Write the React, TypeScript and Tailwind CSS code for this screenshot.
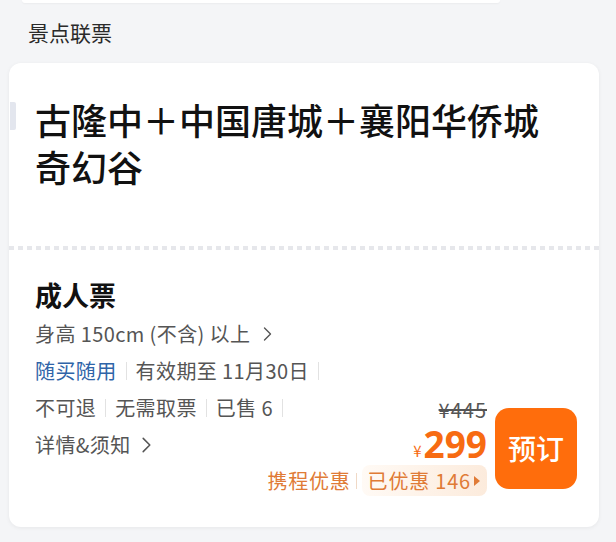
import React from "react";

const Sep = () => (
  <span className="inline-block w-px h-[18px] bg-[#e2e2e2] mx-[9px] align-[-3px]" />
);

const Chevron = ({ className }: { className?: string }) => (
  <svg viewBox="0 0 10 16" className={className} fill="none">
    <path d="M2 2l6 6-6 6" stroke="currentColor" strokeWidth="1.4" strokeLinecap="round" strokeLinejoin="round" />
  </svg>
);

const App = () => {
  return (
    <div
      className="w-[616px] h-[542px] overflow-hidden bg-[#f4f5f7]"
      style={{ fontFamily: '"Noto Sans CJK SC", "Noto Sans", sans-serif' }}
    >
      {/* previous card edge */}
      <div className="ml-[22px] w-[478px] h-[3px] bg-white rounded-b-[6px] shadow-[0_1px_2px_rgba(0,0,0,0.04)]" />

      {/* section title */}
      <div className="pl-[28px] pt-[14px] text-[21px] leading-[30px] text-[#2a2a2a]">景点联票</div>

      {/* ticket card */}
      <div className="relative mt-[16px] ml-[9px] w-[590px] bg-white rounded-[12px] shadow-[0_1px_4px_rgba(0,0,0,0.06)]">
        <div className="absolute left-[1px] top-[39px] w-[6px] h-[28px] bg-[#e3e6ee] rounded-r-[2px]" />

        {/* title */}
        <div className="px-[26px] pt-[33px] text-[36px] leading-[47px] font-medium text-[#111] whitespace-nowrap">
          古隆中＋中国唐城＋襄阳华侨城
          <br />
          奇幻谷
        </div>

        {/* dotted divider */}
        <div className="mt-[56px] h-[4px] bg-[repeating-linear-gradient(90deg,#e6e7eb_0_5px,transparent_5px_9px)]" />

        {/* ticket info */}
        <div className="grid pl-[26px] pr-[22px] pt-[28px] pb-[31px] whitespace-nowrap">
          <div className="col-start-1 row-start-1 justify-self-start flex flex-col pb-[33px] text-[20px] tracking-[0.4px] text-[#555]">
            <div className="text-[27px] leading-[34px] font-semibold text-[#111] tracking-normal">成人票</div>
            <div className="mt-[3px] flex items-center h-[37px]">
              身高 150cm (不含) 以上
              <Chevron className="ml-[12px] w-[11px] h-[16px]" />
            </div>
            <div className="flex items-center h-[37px]">
              <span className="text-[#2f64a8]">随买随用</span>
              <Sep />
              有效期至 11月30日
              <Sep />
            </div>
            <div className="flex items-center h-[37px]">
              不可退
              <Sep />
              无需取票
              <Sep />
              已售 6
              <Sep />
            </div>
            <div className="flex items-center h-[37px]">
              详情&须知
              <Chevron className="ml-[10px] w-[11px] h-[18px]" />
            </div>
          </div>

          <div className="col-start-1 row-start-1 justify-self-end self-end flex items-center gap-[8px]">
            <div className="flex flex-col items-end">
              <div className="text-[20px] leading-[20px] text-[#555] line-through tracking-[1px]">¥445</div>
              <div className="mt-[4px] h-[38px] flex items-end text-[#f76b12]">
                <span className="text-[15px] leading-[18px] mr-[2px] mb-[2px]">¥</span>
                <span
                  className="inline-block text-[37px] leading-[36px] font-bold"
                  style={{ fontFamily: '"Noto Sans", sans-serif' }}
                >
                  299
                </span>
              </div>
              <div className="mt-[3px] flex items-center h-[31px] text-[20px] text-[#e07b36] tracking-[0.8px]">
                <span>携程优惠</span>
                <span className="inline-block w-px h-[16px] bg-[#f0d9c6] mx-[5px]" />
                <span className="flex items-center h-[31px] pl-[6px] pr-[7px] rounded-[8px] bg-gradient-to-r from-[#fffaf5] to-[#fcebdc]">
                  已优惠 146
                  <svg viewBox="0 0 6 10" className="ml-[3px] w-[6px] h-[10px]">
                    <path d="M0 0l6 5-6 5z" fill="currentColor" />
                  </svg>
                </span>
              </div>
            </div>
            <button className="shrink-0 w-[82px] h-[81px] rounded-[14px] bg-[#ff6d0c] text-white text-[28px] font-medium">
              预订
            </button>
          </div>
        </div>
      </div>
    </div>
  );
};

export default App;
